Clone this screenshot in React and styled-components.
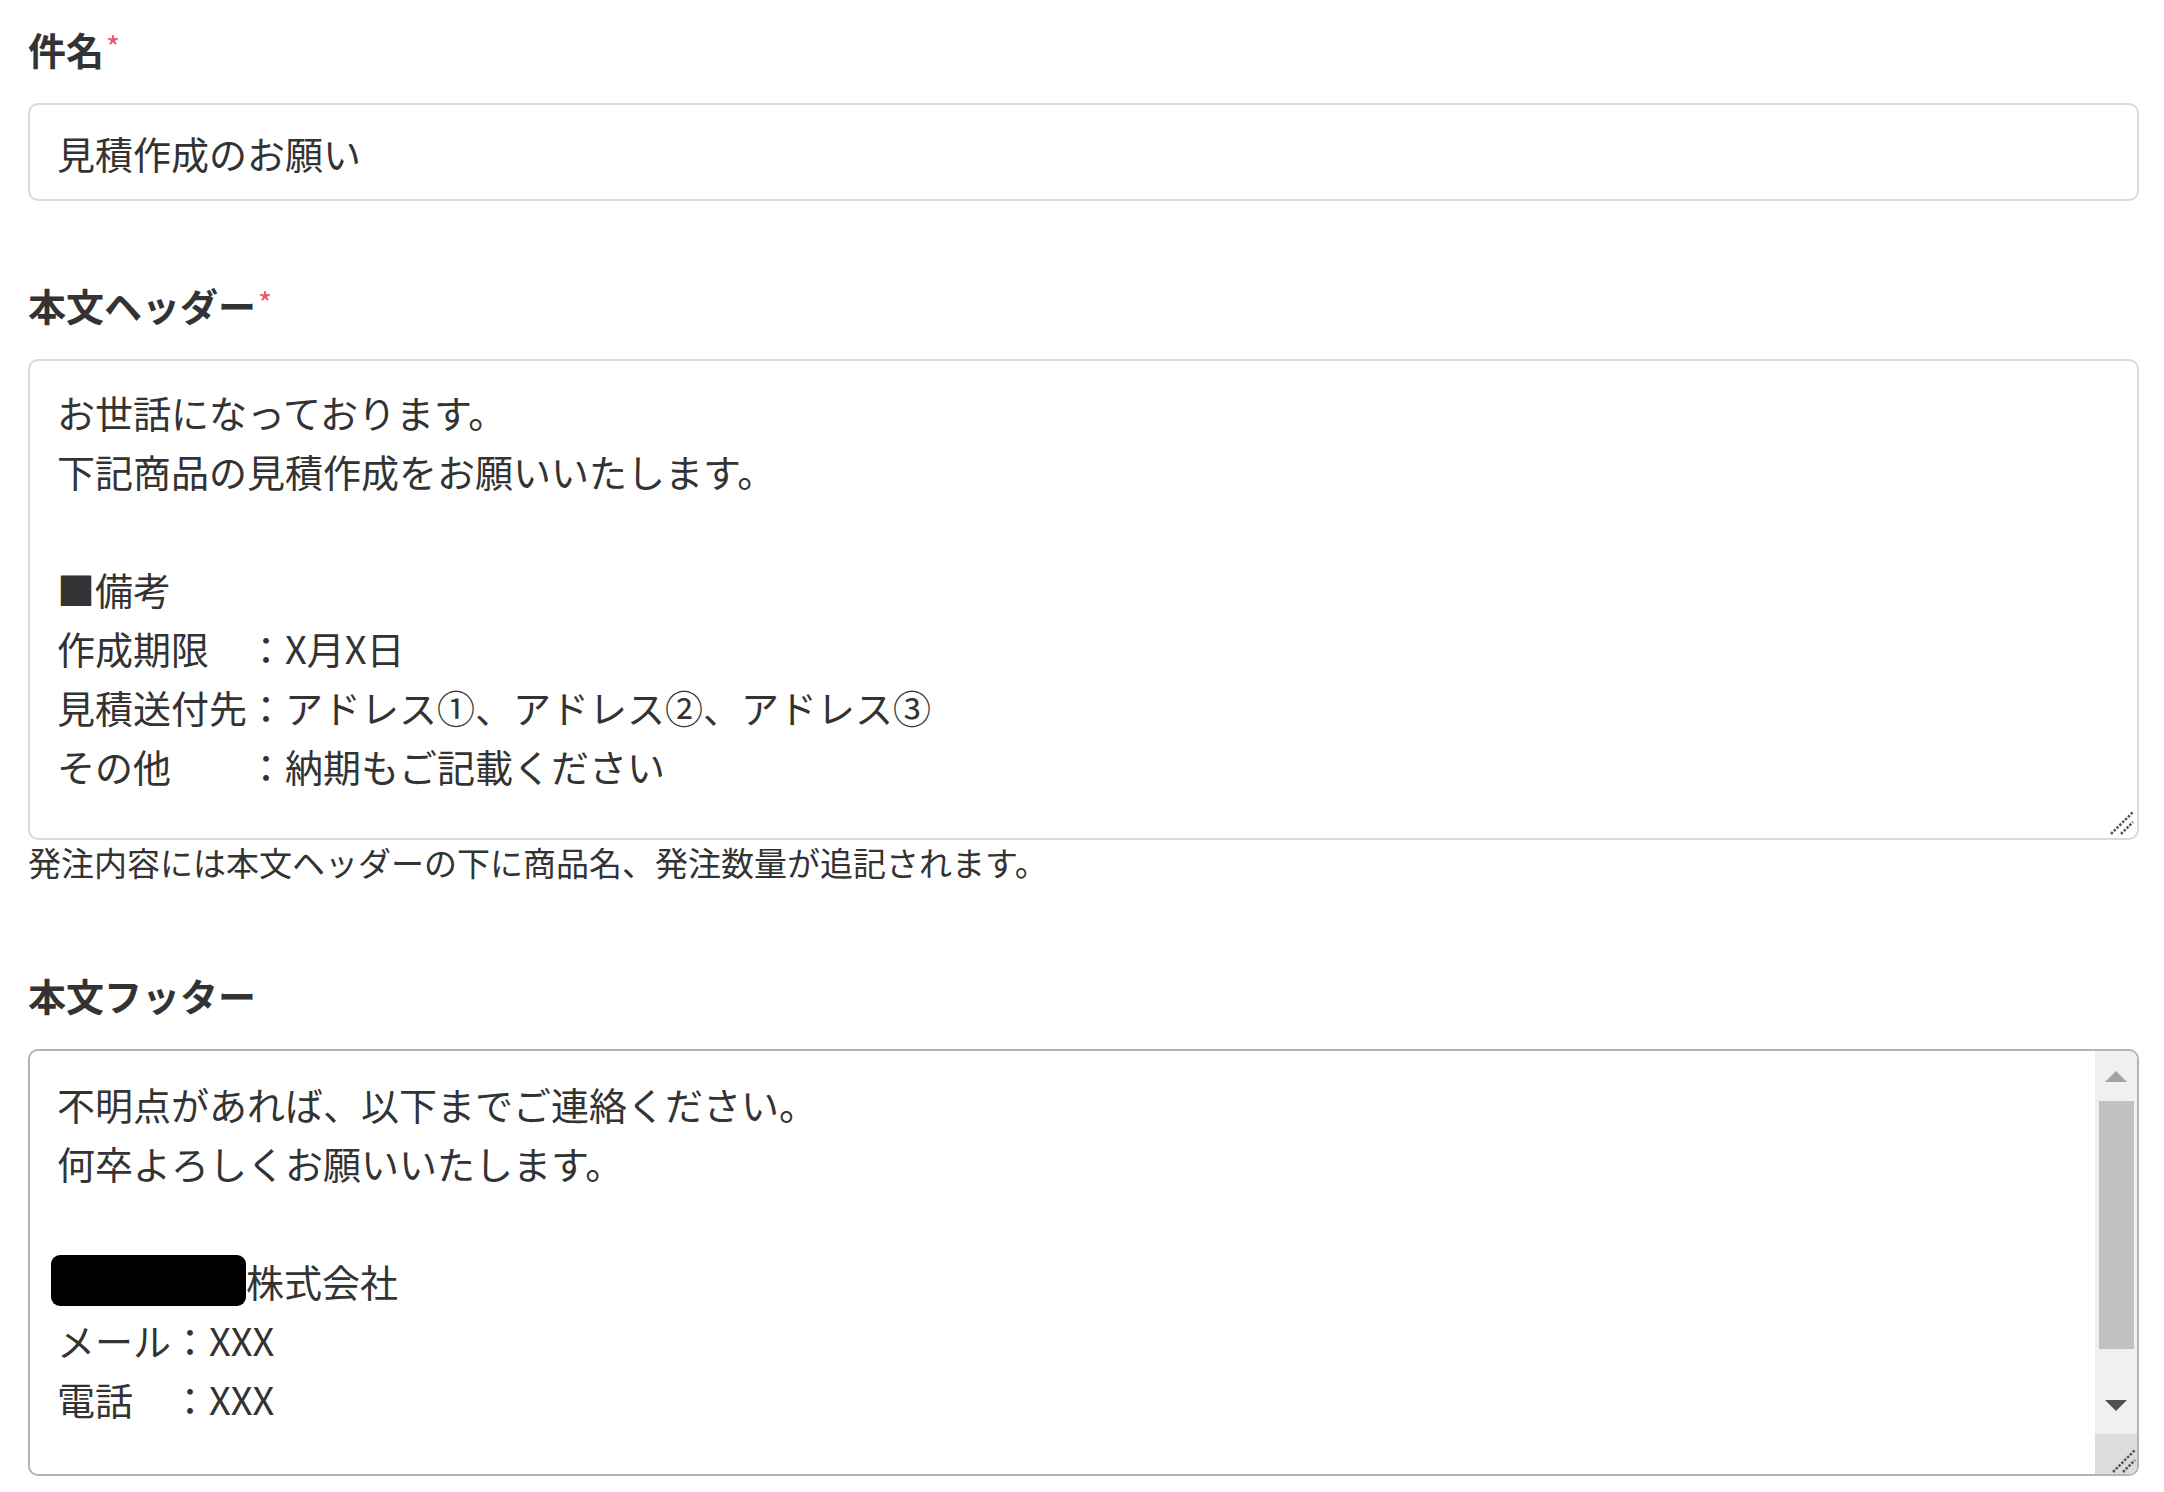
import React from 'react';
import styled, { createGlobalStyle } from "styled-components";

const GlobalStyle = createGlobalStyle`
  html, body {
    margin: 0;
    padding: 0;
    background: #ffffff;
  }
  body {
    font-family: "Noto Sans CJK JP", "Noto Sans", sans-serif;
    color: #333333;
  }
`;

const headerText = `お世話になっております。
下記商品の見積作成をお願いいたします。

■備考
作成期限　：X月X日
見積送付先：アドレス①、アドレス②、アドレス③
その他　　：納期もご記載ください`;

// two diagonal grip lines, same as the browser resizer
const Grip = () => (
  <svg width="26" height="26" viewBox="0 0 26 26">
    <line x1="3" y1="25" x2="25" y2="3" stroke="#555555" strokeWidth="2.5" strokeDasharray="2.5 1.5" />
    <line x1="13" y1="25" x2="25" y2="13" stroke="#555555" strokeWidth="2.5" strokeDasharray="2.5 1.5" />
  </svg>
);

export default function App() {
  return (
    <>
      <GlobalStyle />
      <Page>
        <Field>
          <Label>件名<Required>*</Required></Label>
          <Input readOnly defaultValue="見積作成のお願い" />
        </Field>

        <Field>
          <Label>本文ヘッダー<Required>*</Required></Label>
          <AreaWrap>
            <TextArea readOnly defaultValue={headerText} />
            <AreaGrip><Grip /></AreaGrip>
          </AreaWrap>
          <Help>発注内容には本文ヘッダーの下に商品名、発注数量が追記されます。</Help>
        </Field>

        <Field>
          <Label>本文フッター</Label>
          <ScrollBox>
            <ScrollContent>
              <Line>不明点があれば、以下までご連絡ください。</Line>
              <Line>何卒よろしくお願いいたします。</Line>
              <Line>&nbsp;</Line>
              <Line><Redacted />株式会社</Line>
              <Line>メール：XXX</Line>
              <Line>電話　：XXX</Line>
            </ScrollContent>
            <ScrollBar>
              <ArrowButton $h={50}>
                <Arrow $up />
              </ArrowButton>
              <Track>
                <Thumb />
              </Track>
              <ArrowButton $h={58}>
                <Arrow />
              </ArrowButton>
              <Corner>
                <Grip />
              </Corner>
            </ScrollBar>
          </ScrollBox>
        </Field>
      </Page>
    </>
  );
}

const Page = styled.div`
  padding: 20px 25px 0 28px;
  display: flex;
  flex-direction: column;
  gap: 75px;
`;

const Field = styled.div`
  display: flex;
  flex-direction: column;
`;

const Label = styled.div`
  font-size: 38px;
  font-weight: 700;
  line-height: 53px;
  color: #333333;
  margin-bottom: 28px;
`;

const Required = styled.span`
  font-size: 30px;
  font-weight: 400;
  color: #e8536a;
  vertical-align: 6px;
  margin-left: 2px;
`;

const Input = styled.input`
  box-sizing: border-box;
  width: 100%;
  height: 98px;
  padding: 0 27px;
  border: 2.5px solid #dadada;
  border-radius: 10px;
  font-family: "Noto Sans CJK JP", sans-serif;
  font-size: 38px;
  color: #333333;
  background: #ffffff;
  outline: none;
`;

const AreaWrap = styled.div`
  position: relative;
`;

const TextArea = styled.textarea`
  display: block;
  box-sizing: border-box;
  width: 100%;
  height: 481px;
  padding: 21px 27px;
  border: 2.5px solid #dadada;
  border-radius: 10px;
  font-family: "Noto Sans CJK JP", sans-serif;
  font-size: 38px;
  line-height: 59px;
  color: #333333;
  background: #ffffff;
  outline: none;
  resize: none;
  overflow: hidden;
`;

const AreaGrip = styled.div`
  position: absolute;
  right: 5px;
  bottom: 5px;
  width: 26px;
  height: 26px;
`;

const Help = styled.div`
  margin-top: 0;
  margin-bottom: 9px;
  font-size: 33px;
  line-height: 44px;
  color: #333333;
`;

const ScrollBox = styled.div`
  box-sizing: border-box;
  width: 100%;
  height: 427px;
  display: flex;
  border: 2.5px solid #b4b4b4;
  border-radius: 10px;
  overflow: hidden;
  background: #ffffff;
`;

const ScrollContent = styled.div`
  flex: 1;
  padding: 23px 27px;
  overflow: hidden;
`;

const Line = styled.div`
  font-size: 38px;
  line-height: 59px;
  color: #333333;
  white-space: pre;
  display: flex;
  align-items: center;
`;

const Redacted = styled.span`
  display: inline-block;
  width: 195px;
  height: 51px;
  margin-left: -6px;
  background: #000000;
  border-radius: 9px;
`;

const ScrollBar = styled.div`
  width: 42px;
  display: flex;
  flex-direction: column;
  background: #f0f0f0;
`;

const ArrowButton = styled.div`
  height: ${(p) => p.$h}px;
  display: flex;
  align-items: center;
  justify-content: center;
`;

const Arrow = styled.span`
  width: 0;
  height: 0;
  border-left: 11px solid transparent;
  border-right: 11px solid transparent;
  ${(p) =>
    p.$up
      ? `border-bottom: 11px solid #a3a3a3;`
      : `border-top: 11px solid #505050;`}
`;

const Track = styled.div`
  flex: 1;
  padding: 0 3px 0 4px;
`;

const Thumb = styled.div`
  height: 248px;
  background: #c1c1c1;
`;

const Corner = styled.div`
  height: 39px;
  background: #dcdcdc;
  display: flex;
  align-items: flex-end;
  justify-content: flex-end;
  padding: 0 1px 1px 0;
`;
